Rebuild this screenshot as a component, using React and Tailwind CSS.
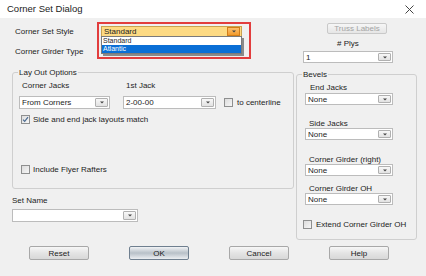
import React from 'react';

function Arrow() {
  return (
    <svg width="4" height="3" viewBox="0 0 4 3">
      <path d="M0 0.5h4L2 2.5z" fill="#444" />
    </svg>
  );
}

function Combo({ value, className = '' }) {
  return (
    <div className={`flex items-center bg-white border border-[#bcbcbc] pl-[2px] pr-[1px] ${className}`}>
      <span className="flex-1">{value}</span>
      <div className="w-[13px] h-[calc(100%-2px)] flex items-center justify-center border border-[#b0b0b0] rounded-[1px] bg-gradient-to-b from-[#f8f8f8] to-[#e2e2e2]">
        <Arrow />
      </div>
    </div>
  );
}

function CheckBox({ checked }) {
  return (
    <div className="w-[9px] h-[9px] border border-[#8e8f8f] bg-gradient-to-br from-[#dcdcdc] to-[#f6f6f6] flex items-center justify-center">
      {checked && (
        <svg width="7" height="7" viewBox="0 0 7 7">
          <path d="M1 3.6l1.7 1.8L6 1.2" fill="none" stroke="#4a6a90" strokeWidth="1.2" />
        </svg>
      )}
    </div>
  );
}

function Button({ label, variant }) {
  const look =
    variant === 'default'
      ? 'border-[#6f7f8f] from-[#f2f4f6] via-[#b8c0c8] to-[#eceff2]'
      : 'border-[#a8a8a8] from-[#f7f7f7] via-[#e4e4e4] to-[#d8d8d8]';
  return (
    <div className={`w-[60px] h-[14px] flex items-center justify-center border rounded-[2px] bg-gradient-to-b ${look}`}>
      {label}
    </div>
  );
}

export default function App() {
  return (
    <div className="relative w-[426px] h-[276px] bg-[#f0f0f0] overflow-hidden font-['Liberation_Sans',Arial,sans-serif] text-[8px] leading-[9px] text-[#1c1c1c]">
      {/* title bar */}
      <div className="h-[18px] bg-white flex items-center justify-between pl-[7px] pr-[12px]">
        <span className="text-[9.5px] leading-[10px]">Corner Set Dialog</span>
        <svg width="9" height="9" viewBox="0 0 9 9">
          <path d="M0.5 0.5l8 8M8.5 0.5l-8 8" stroke="#444" strokeWidth="1" />
        </svg>
      </div>

      <div className="flex pl-[12px]">
        {/* left column */}
        <div className="w-[282px] flex flex-col">
          <div className="mt-[8px] h-[11px] flex items-center">
            <span className="w-[89px] pl-[3px]">Corner Set Style</span>
            <div className="w-[141px] h-[11px] flex items-center bg-[#fdda83] border border-[#c9a34f] pl-[2px] pr-[1px]">
              <span className="flex-1">Standard</span>
              <div className="w-[13px] h-[9px] flex items-center justify-center border border-[#d17d18] bg-gradient-to-b from-[#fbc06a] to-[#f29a28]">
                <Arrow />
              </div>
            </div>
          </div>
          <div className="mt-[10px] pl-[3px] h-[9px]">Corner Girder Type</div>

          {/* Lay Out Options */}
          <div className="relative mt-[16px] h-[117px] border border-[#cfcfcf] rounded-[3px] flex flex-col pl-[6px]">
            <span className="absolute left-[5px] -top-[5px] px-[1px] bg-[#f0f0f0]">Lay Out Options</span>
            <div className="mt-[8px] h-[9px] flex pl-[3px]">
              <span className="w-[104px]">Corner Jacks</span>
              <span>1st Jack</span>
            </div>
            <div className="mt-[6px] flex items-center">
              <Combo value="From Corners" className="w-[91px] h-[13px]" />
              <Combo value="2-00-00" className="ml-[13px] w-[93px] h-[13px]" />
              <div className="ml-[8px]">
                <CheckBox />
              </div>
              <span className="ml-[4px]">to centerline</span>
            </div>
            <div className="mt-[6px] flex items-center pl-[2px]">
              <CheckBox checked />
              <span className="ml-[3px]">Side and end jack layouts match</span>
            </div>
            <div className="mt-[41px] flex items-center pl-[2px]">
              <CheckBox />
              <span className="ml-[3px]">Include Flyer Rafters</span>
            </div>
          </div>

          <div className="mt-[7px] h-[9px]">Set Name</div>
          <Combo value="" className="mt-[4px] w-[126px] h-[13px]" />
        </div>

        {/* right column */}
        <div className="ml-[2px] w-[121px] flex flex-col">
          <div className="mt-[5px] ml-[31px] w-[60px] h-[11px] flex items-center justify-center border border-[#c9c9c9] rounded-[2px] bg-gradient-to-b from-[#f6f6f6] to-[#e6e6e6] text-[#a4a4a4]">
            Truss Labels
          </div>
          <div className="mt-[5px] ml-[41px] h-[9px]"># Plys</div>
          <Combo value="1" className="mt-[3px] ml-[7px] w-[90px] h-[12px]" />

          {/* Bevels */}
          <div className="relative mt-[11px] h-[166px] border border-[#cfcfcf] rounded-[3px] flex flex-col">
            <span className="absolute left-[5px] -top-[5px] px-[1px] bg-[#f0f0f0]">Bevels</span>
            <div className="mt-[8px] ml-[13px] h-[9px]">End Jacks</div>
            <Combo value="None" className="mt-[1px] ml-[8px] w-[88px] h-[12px]" />
            <div className="mt-[14px] ml-[12px] h-[9px]">Side Jacks</div>
            <Combo value="None" className="ml-[8px] w-[88px] h-[12px]" />
            <div className="mt-[15px] ml-[12px] h-[9px]">Corner Girder (right)</div>
            <Combo value="None" className="ml-[8px] w-[88px] h-[12px]" />
            <div className="mt-[8px] ml-[12px] h-[9px]">Corner Girder OH</div>
            <Combo value="None" className="ml-[8px] w-[88px] h-[12px]" />
            <div className="mt-[15px] ml-[6px] flex items-center">
              <CheckBox />
              <span className="ml-[4px]">Extend Corner Girder OH</span>
            </div>
          </div>
        </div>
      </div>

      {/* buttons */}
      <div className="mt-[6px] flex gap-[40px] pl-[29px]">
        <Button label="Reset" />
        <Button label="OK" variant="default" />
        <Button label="Cancel" />
        <Button label="Help" />
      </div>

      {/* open dropdown list */}
      <div className="absolute left-[101px] top-[36px] w-[141px] bg-white border border-[#7a7a7a] shadow-[2px_2px_0_#8a8a8a] flex flex-col text-[7px] leading-[8px]">
        <div className="h-[8px] pl-[1px]">Standard</div>
        <div className="h-[8px] pl-[1px] bg-[#0a6fd6] text-white">Atlantic</div>
      </div>

      {/* highlight annotation */}
      <div className="absolute left-[97px] top-[22px] w-[154px] h-[37px] border-2 border-[#e23d3d]" />
    </div>
  );
}
